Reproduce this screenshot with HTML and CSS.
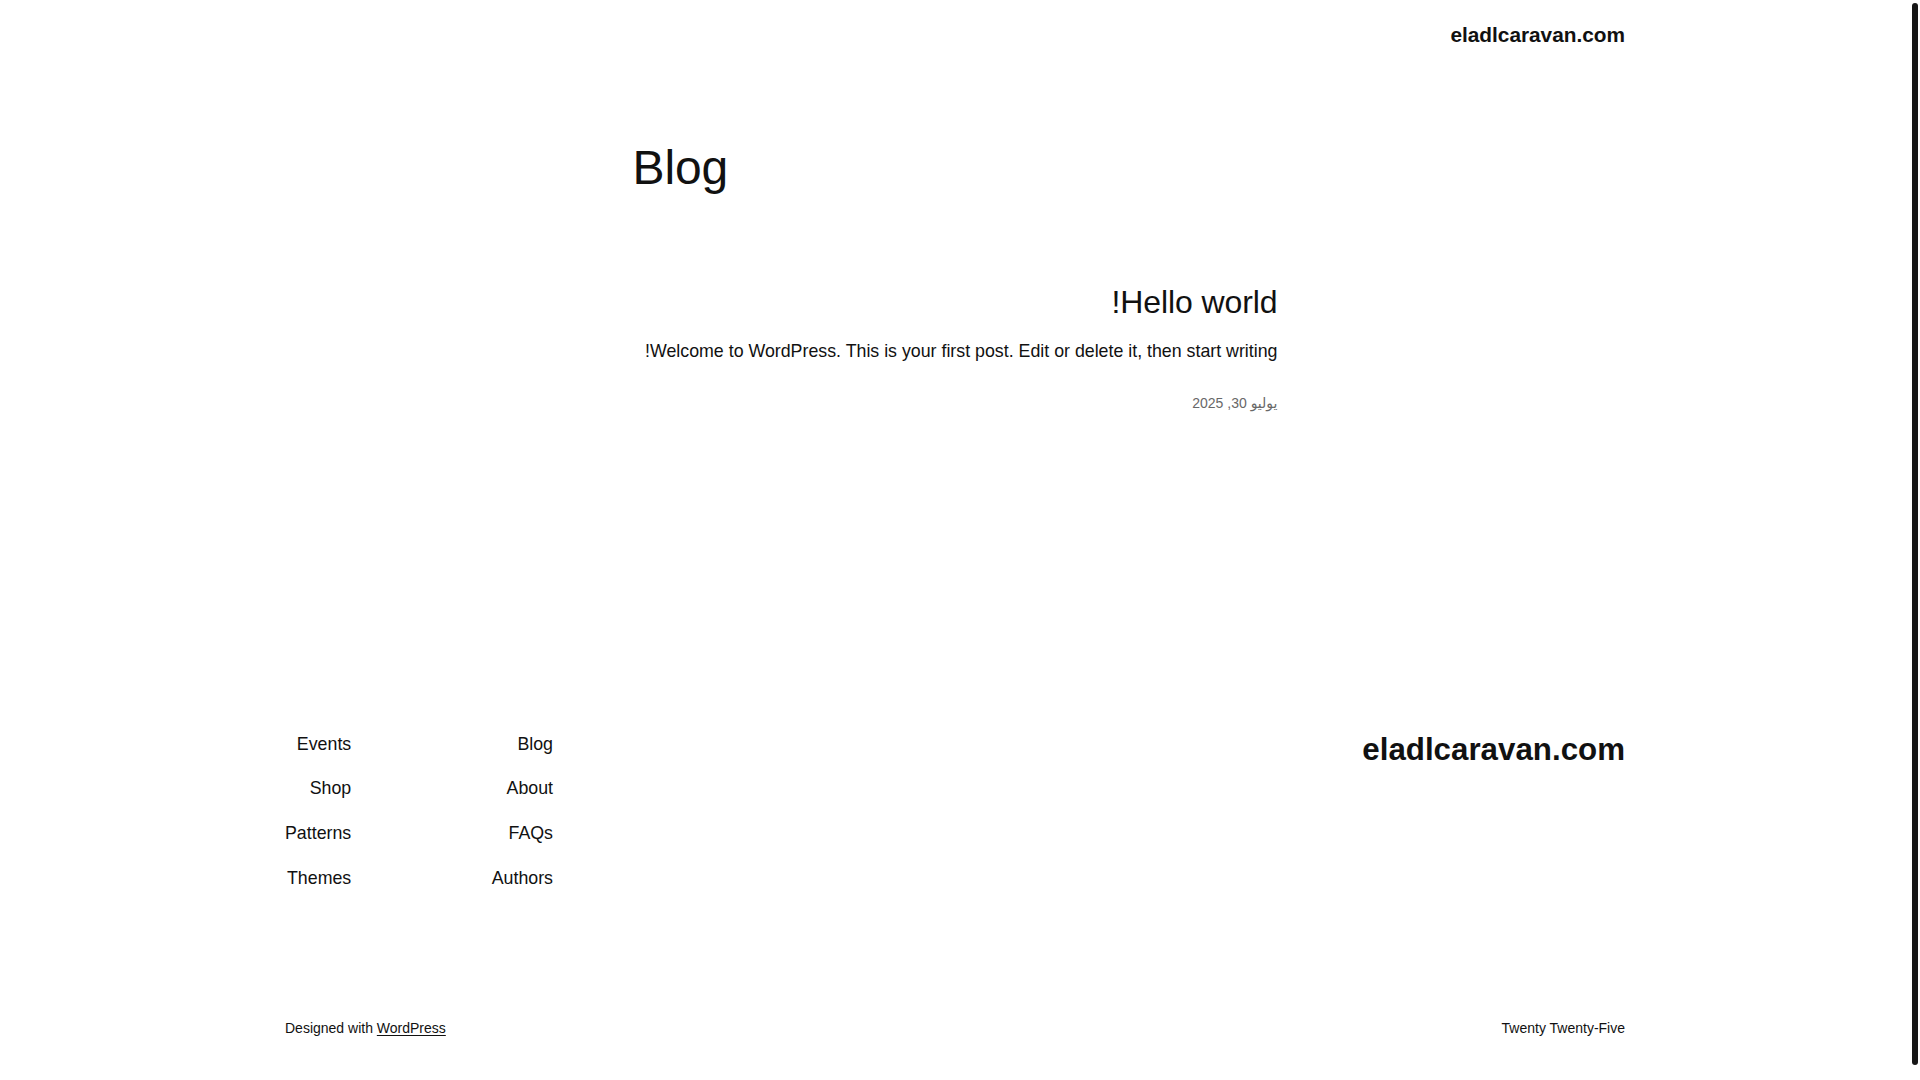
FILE: index.html
```html
<!DOCTYPE html>
<html lang="ar" dir="rtl">
<head>
<meta charset="utf-8">
<title>Blog – eladlcaravan.com</title>
<link rel="stylesheet" href="styles.css">
</head>
<body>
<div class="page">
  <header class="site-header wide">
    <p class="site-title"><a href="#">eladlcaravan.com</a></p>
  </header>

  <main class="site-main">
    <h1 class="archive-title content">Blog</h1>

    <article class="post content">
      <h2 class="post-title"><a href="#">Hello world!</a></h2>
      <p class="post-excerpt">Welcome to WordPress. This is your first post. Edit or delete it, then start writing!</p>
      <p class="post-date"><time>يوليو 30, 2025</time></p>
    </article>
  </main>

  <footer class="site-footer wide">
    <div class="footer-top">
      <h2 class="footer-title"><a href="#">eladlcaravan.com</a></h2>
      <div class="footer-navs">
        <nav class="footer-nav">
          <a href="#">Blog</a>
          <a href="#">About</a>
          <a href="#">FAQs</a>
          <a href="#">Authors</a>
        </nav>
        <nav class="footer-nav">
          <a href="#">Events</a>
          <a href="#">Shop</a>
          <a href="#">Patterns</a>
          <a href="#">Themes</a>
        </nav>
      </div>
    </div>
    <div class="footer-bottom">
      <p class="credit">Twenty Twenty-Five</p>
      <p class="credit">Designed with <a class="ul" href="#">WordPress</a></p>
    </div>
  </footer>
</div>
<div class="scroll-thumb"></div>
</body>
</html>
```
FILE: styles.css
```css
html, body {
  margin: 0;
  padding: 0;
  background: #ffffff;
}

body {
  font-family: "Liberation Sans", Arial, "DejaVu Sans", sans-serif;
  color: #111111;
  height: 1080px;
  overflow: hidden;
}

a {
  color: inherit;
  text-decoration: none;
}

p, h1, h2 {
  margin: 0;
}

.page {
  margin-right: 10px;
}

.wide {
  max-width: 1340px;
  margin-left: auto;
  margin-right: auto;
}

.content {
  max-width: 645px;
  margin-left: auto;
  margin-right: auto;
}

/* header */
.site-header {
  padding-top: 20px;
}

.site-title {
  font-size: 20.8px;
  font-weight: 700;
  line-height: 29px;
}

/* main */
.archive-title {
  margin-top: 92px;
  font-size: 48px;
  font-weight: 400;
  line-height: 54px;
  text-align: left;
  letter-spacing: -0.1px;
}

.post {
  margin-top: 88px;
}

.post-title {
  font-size: 32px;
  font-weight: 400;
  line-height: 38.4px;
  letter-spacing: -0.1px;
}

.post-excerpt {
  margin-top: 16px;
  font-size: 17.8px;
  line-height: 28.8px;
}

.post-date {
  margin-top: 28px;
  font-size: 14px;
  line-height: 19.6px;
  color: #686868;
}

/* footer */
.site-footer {
  margin-top: 317px;
}

.footer-top {
  display: flex;
  justify-content: space-between;
  align-items: flex-start;
}

.footer-title {
  font-size: 31.3px;
  font-weight: 700;
  line-height: 38.4px;
}

.footer-navs {
  display: flex;
  gap: 140.5px;
}

.footer-nav {
  display: flex;
  flex-direction: column;
  gap: 17.7px;
  font-size: 17.8px;
  line-height: 27px;
}

.footer-bottom {
  margin-top: 127.5px;
  display: flex;
  justify-content: space-between;
  font-size: 14px;
  line-height: 19.6px;
}

.ul {
  text-decoration: underline;
  text-underline-offset: 2px;
}

/* overlay scrollbar thumb */
.scroll-thumb {
  position: fixed;
  top: 3px;
  right: 2px;
  width: 6.5px;
  height: 1062px;
  border-radius: 4px;
  background: #161616;
}
```
